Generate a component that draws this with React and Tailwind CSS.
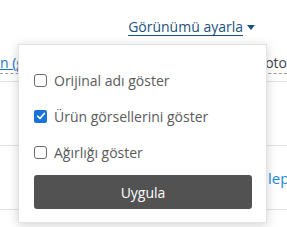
import React from "react";

function Box({ checked }) {
  if (checked) {
    return (
      <span className="w-[13px] h-[13px] rounded-[2px] bg-[#1a73d9] flex items-center justify-center shrink-0">
        <svg viewBox="0 0 12 12" className="w-[10px] h-[10px]">
          <path d="M2 6.3 L4.8 9 L10 3" fill="none" stroke="#fff" strokeWidth="2" strokeLinecap="round" strokeLinejoin="round" />
        </svg>
      </span>
    );
  }
  return <span className="w-[13px] h-[13px] rounded-[3px] border border-[#6b6b6b] bg-white shrink-0" />;
}

export default function App() {
  const options = [
    { label: "Orijinal adı göster", checked: false },
    { label: "Ürün görsellerini göster", checked: true },
    { label: "Ağırlığı göster", checked: false },
  ];

  return (
    <div className="relative w-[287px] h-[227px] bg-white overflow-hidden font-['Open_Sans',sans-serif]">
      {/* Header */}
      <div className="h-[44px] flex items-start justify-end pr-[32px] pt-[17px]">
        <button className="flex items-center gap-[4px] text-[14px] leading-[20px] text-[#1d4f7e] underline underline-offset-[3px] decoration-1">
          Görünümü ayarla
          <svg viewBox="0 0 8 5" className="w-[8px] h-[5px] mt-[1px]">
            <path d="M0 0 H8 L4 5 Z" fill="#1d4f7e" />
          </svg>
        </button>
      </div>

      {/* Table behind */}
      <div className="h-[38px] border-b border-[#e2e2e2] flex justify-between items-start pt-[10px] text-[14px] leading-[18px]">
        <span className="text-[#1a74c0] underline border-b border-dashed border-[#9a9a9a] pb-[1px] whitespace-nowrap">n (gizle)</span>
        <span className="text-[#444] border-b border-dashed border-[#9a9a9a] pb-[1px] whitespace-nowrap">Foto</span>
      </div>
      <div className="h-[64px] border-b border-[#e2e2e2]" />
      <div className="h-[64px] border-b border-[#e2e2e2] flex items-center pl-[268px] pt-[1px]">
        <span className="text-[15px] text-[#1a8ad6] whitespace-nowrap">lep</span>
      </div>

      {/* Dropdown */}
      <div className="absolute left-[18px] top-[44px] w-[249px] h-[179px] bg-white border border-[#e4e4e4] shadow-[0_2px_10px_rgba(0,0,0,0.18)] px-[15px] pt-[27px]">
        <div className="flex flex-col gap-[20px]">
          {options.map((o) => (
            <label key={o.label} className="flex items-center gap-[7px] h-[16px] text-[14px] text-[#5a5a5a]">
              <Box checked={o.checked} />
              <span className="whitespace-nowrap">{o.label}</span>
            </label>
          ))}
        </div>
        <button className="mt-[15px] w-[218px] h-[34px] rounded-[3px] bg-[#525252] text-white text-[14px]">
          Uygula
        </button>
      </div>
    </div>
  );
}
